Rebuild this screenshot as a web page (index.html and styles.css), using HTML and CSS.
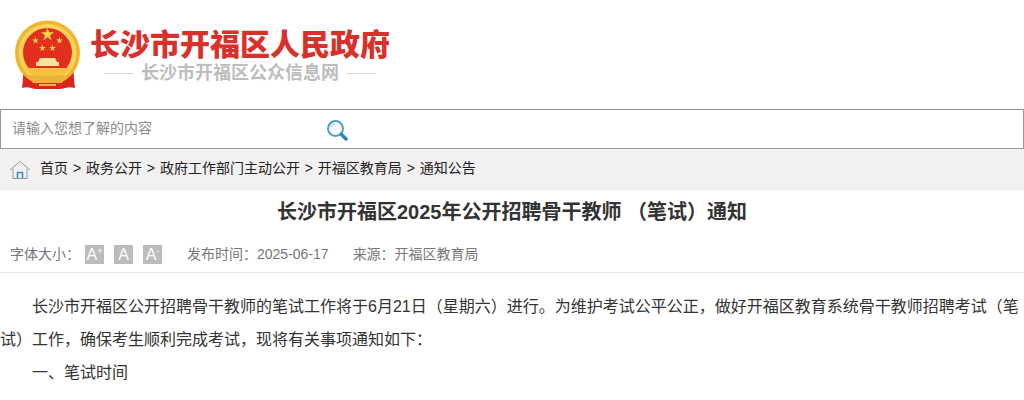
FILE: index.html
```html
<!DOCTYPE html>
<html lang="zh-CN">
  <head>
    <meta charset="UTF-8" />
    <meta name="viewport" content="width=device-width, initial-scale=1.0" />
    <title>长沙市开福区2025年公开招聘骨干教师（笔试）通知</title>
    <link rel="stylesheet" href="styles.css">
  </head>
  <body>
    <div class="header">
      <svg class="emblem" viewBox="0 0 66 72" width="66" height="72">
        <defs>
          <polygon id="star" points="0,-1 .225,-.309 .951,-.309 .363,.118 .588,.809 0,.382 -.588,.809 -.363,.118 -.951,-.309 -.225,-.309" fill="#fbd64a" />
        </defs>
        <path d="M9 48 C8 56 8 62 7 69 C13 67 16 70 22 70 L44 70 C50 70 53 67 60 69 C59 62 59 56 58 48 Z" fill="#d8261f" />
        <circle cx="32.5" cy="34" r="32.5" fill="#f0b52e" />
        <circle cx="32.5" cy="34" r="29" fill="#fbd35c" />
        <circle cx="32.5" cy="33.5" r="24.5" fill="#e2301f" />
        <use href="#star" transform="translate(32.5 15.5) scale(7)" />
        <use href="#star" transform="translate(20.5 21.5) scale(3.6)" />
        <use href="#star" transform="translate(44.5 21.5) scale(3.6)" />
        <use href="#star" transform="translate(27.5 29) scale(3.6)" />
        <use href="#star" transform="translate(37.5 29) scale(3.6)" />
        <path d="M25 39 H40 L42 43 H44 V47 H21 V43 H23 Z" fill="#f8e2a0" />
        <path d="M10 49 H55 C52 54 44 60 32.5 60 C21 60 13 54 10 49 Z" fill="#f5c23f" />
        <path d="M14 57 C22 54 27 60 32.5 56 C38 60 43 54 51 57 L47 64 H18 Z" fill="#eab43a" />
        <path d="M22 64 H43 V69 H22 Z" fill="#d8261f" />
        <path d="M24 65 H41 V67 H24 Z" fill="#eab43a" />
      </svg>
      <div class="site-name">
        <div class="site-title">长沙市开福区人民政府</div>
        <div class="site-sub">
          <span class="sub-line"></span>
          <span>长沙市开福区公众信息网</span>
          <span class="sub-line"></span>
        </div>
      </div>
    </div>

    <div class="search">
      <span class="search-text">请输入您想了解的内容</span>
      <svg class="search-icon" viewBox="0 0 22 22" width="22" height="22">
        <circle cx="9.5" cy="9.5" r="7.5" fill="none" stroke="#4a9fc8" stroke-width="2" />
        <path d="M5 8 C5.5 6 7 5 9 4.6" fill="none" stroke="#a9d3e6" stroke-width="1.2" />
        <path d="M15.5 15.5 L20 20" stroke="#2f86b5" stroke-width="3.4" stroke-linecap="round" />
      </svg>
    </div>

    <div class="crumb">
      <svg class="home-icon" viewBox="0 0 22 20" width="22" height="20">
        <path d="M1 10 L11 1.5 L21 10 M4 8.5 V18.5 H18 V8.5" fill="none" stroke="#8c9aa5" stroke-width="1" />
        <path d="M8.5 18.5 V12.5 H13.5 V18.5" fill="none" stroke="#3b8fc0" stroke-width="1.6" />
      </svg>
      <span class="crumb-text">首页 &gt; 政务公开 &gt; 政府工作部门主动公开 &gt; 开福区教育局 &gt; 通知公告</span>
    </div>

    <h1 class="art-title">长沙市开福区2025年公开招聘骨干教师 （笔试）通知</h1>

    <div class="meta">
      <span class="meta-label">字体大小：</span>
      <span class="size-btns">
        <span class="size-btn">A<sup>+</sup></span>
        <span class="size-btn">A</span>
        <span class="size-btn">A<sup>-</sup></span>
      </span>
      <span class="meta-date">发布时间：2025-06-17</span>
      <span class="meta-source">来源：开福区教育局</span>
    </div>

    <div class="content">
      <p>长沙市开福区公开招聘骨干教师的笔试工作将于6月21日（星期六）进行。为维护考试公平公正，做好开福区教育系统骨干教师招聘考试（笔试）工作，确保考生顺利完成考试，现将有关事项通知如下：</p>
      <p>一、笔试时间</p>
      <p class="next-item">二、考试地点</p>
    </div>
  </body>
</html>
```

FILE: styles.css
```css
body {
  margin: 0;
  font-family: "Liberation Sans", "Noto Sans CJK SC", sans-serif;
  color: #333;
  background: #fff;
  height: 400px;
  overflow: hidden;
}
.header {
  display: flex;
  align-items: center;
  height: 109px;
  padding-left: 15px;
  box-sizing: border-box;
}
.emblem {
  margin-right: 9px;
}
.site-name {
  margin-top: 3px;
}
.site-title {
  font-size: 30px;
  line-height: 34px;
  font-weight: 900;
  color: #d9302a;
  white-space: nowrap;
}
.site-sub {
  display: flex;
  align-items: center;
  gap: 8px;
  margin-left: 14px;
  font-size: 18px;
  line-height: 22px;
  font-weight: 700;
  color: #bdbdbd;
}
.sub-line {
  width: 29px;
  height: 1px;
  background: #d4d4d4;
}
.search {
  display: flex;
  align-items: center;
  height: 40px;
  box-sizing: border-box;
  border: 1px solid #999;
  padding-left: 11px;
}
.search-text {
  width: 314px;
  padding-bottom: 4px;
  font-size: 14px;
  color: #8c8c8c;
}
.search-icon {
  margin-top: 2px;
}
.crumb {
  display: flex;
  align-items: center;
  height: 41px;
  padding-left: 9px;
  background: #f2f0f1;
  font-size: 14px;
  color: #222;
}
.crumb-text {
  padding-bottom: 6px;
  word-spacing: 1px;
}
.home-icon {
  margin-right: 9px;
  margin-top: 1px;
}
.art-title {
  margin: 0;
  padding-top: 9px;
  font-size: 20px;
  line-height: 26px;
  font-weight: 700;
  text-align: center;
  color: #333;
}
.meta {
  display: flex;
  align-items: center;
  height: 37px;
  margin-top: 10px;
  padding-left: 10px;
  border-bottom: 1px solid #e8e8e8;
  font-size: 14px;
  color: #777;
}
.meta-label {
  width: 75px;
  padding-bottom: 2px;
}
.size-btns {
  display: flex;
  gap: 10px;
  width: 102px;
  padding-top: 2px;
}
.size-btn {
  width: 19px;
  height: 19px;
  background: #bcbcbc;
  color: #fff;
  font-size: 16px;
  line-height: 20px;
  text-align: center;
  white-space: nowrap;
}
.size-btn sup {
  font-size: 9px;
  line-height: 0;
  vertical-align: 6px;
}
.meta-date {
  margin-right: 24px;
  padding-bottom: 2px;
}
.meta-source {
  padding-bottom: 2px;
}
.content {
  font-size: 16px;
  line-height: 33px;
  color: #333;
  padding-top: 17px;
}
.content p {
  margin: 0;
  text-indent: 32px;
}
.content .next-item {
  margin-top: 4px;
}
```
